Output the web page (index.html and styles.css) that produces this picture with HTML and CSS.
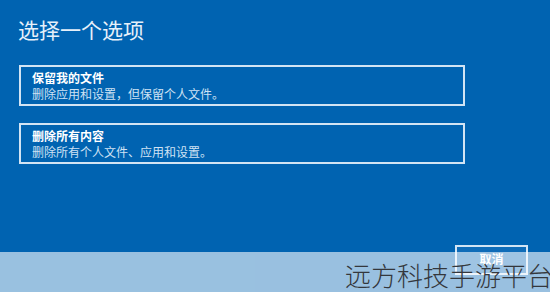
FILE: index.html
```html
<!DOCTYPE html>
<html lang="zh">
<head>
<meta charset="utf-8">
<link rel="stylesheet" href="styles.css">
</head>
<body>
<div class="screen">
  <h1 class="title">选择一个选项</h1>
  <div class="options">
    <div class="option">
      <div class="opt-title">保留我的文件</div>
      <div class="opt-desc">删除应用和设置，但保留个人文件。</div>
    </div>
    <div class="option">
      <div class="opt-title">删除所有内容</div>
      <div class="opt-desc">删除所有个人文件、应用和设置。</div>
    </div>
  </div>
  <div class="footer">
    <div class="btn">取消</div>
  </div>
  <div class="watermark">远方科技手游平台</div>
</div>
</body>
</html>
```
FILE: styles.css
```css
html, body {
  margin: 0;
  padding: 0;
}
body {
  background: #0063b1;
  font-family: "Noto Sans CJK SC", "Noto Sans", sans-serif;
}
.screen {
  position: relative;
  width: 550px;
  height: 292px;
  overflow: hidden;
  box-sizing: border-box;
  padding: 14px 0 0 18px;
}
.title {
  margin: 0;
  font-size: 21px;
  line-height: 30px;
  font-weight: 400;
  color: #e6f0fa;
}
.options {
  display: flex;
  flex-direction: column;
  gap: 17px;
  margin-top: 21px;
  margin-left: 1px;
}
.option {
  width: 446px;
  height: 41px;
  box-sizing: border-box;
  border: 2px solid #d2e4f4;
  padding: 2px 11px;
}
.opt-title {
  font-size: 12px;
  line-height: 17px;
  font-weight: 700;
  color: #ffffff;
}
.opt-desc {
  font-size: 12px;
  line-height: 16px;
  color: #cfe2f4;
}
.footer {
  display: flex;
  justify-content: flex-end;
  padding-right: 22px;
  margin-top: 81px;
}
.btn {
  width: 73px;
  height: 30px;
  box-sizing: border-box;
  border: 2px solid #d2e4f4;
  background: #0f6cb8;
  color: #ffffff;
  font-size: 12px;
  font-weight: 700;
  text-align: center;
  line-height: 24px;
}
.watermark {
  position: absolute;
  left: 0;
  right: 0;
  bottom: 0;
  height: 40px;
  box-sizing: border-box;
  padding-top: 3px;
  margin-right: -3px;
  background: rgba(255, 255, 255, 0.6);
  color: #34373c;
  font-size: 26px;
  font-weight: 300;
  line-height: 40px;
  text-align: right;
  white-space: nowrap;
}
```
